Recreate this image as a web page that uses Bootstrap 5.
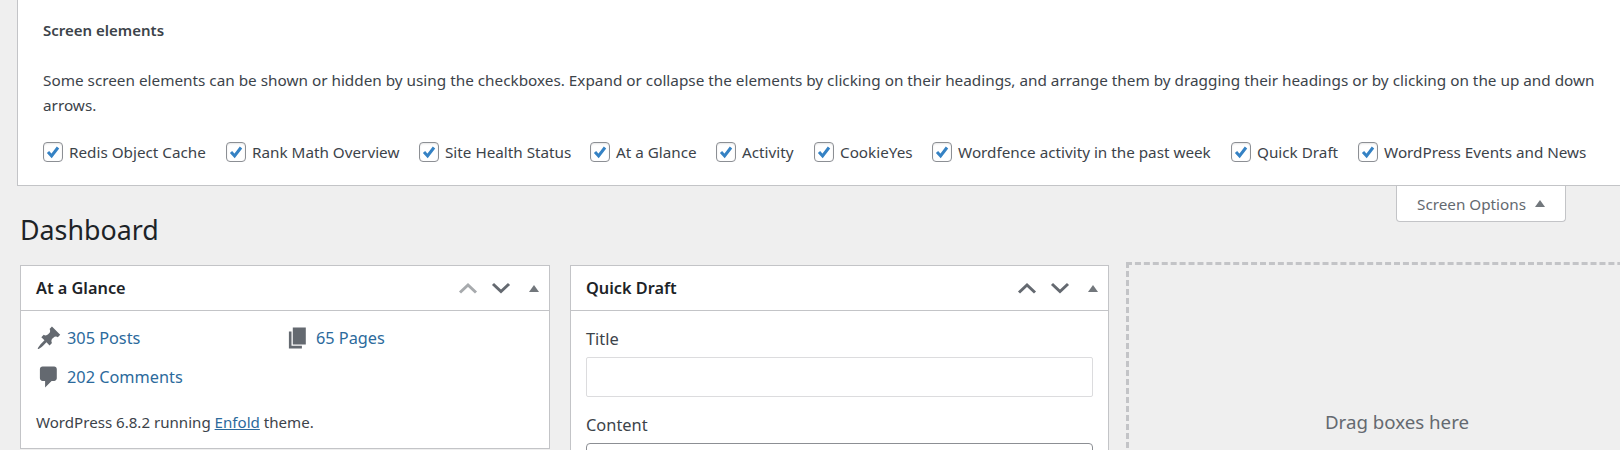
<!DOCTYPE html>
<html lang="en"><head><meta charset="utf-8"><title>Dashboard</title>
<link href="https://cdn.jsdelivr.net/npm/bootstrap@5.3.0/dist/css/bootstrap.min.css" rel="stylesheet">
<style>
html,body{height:450px;overflow:hidden}
body{background:#efefef;color:#3c434a;font-family:"Noto Sans","Open Sans",sans-serif;font-size:15.25px;line-height:24px}
a{color:#2c6a9c}
.opts-panel{margin-left:17px;height:186px;background:#fff;border-left:1px solid #c3c4c7;border-bottom:1px solid #c3c4c7;padding:18px 25px 0}
.opts-title{font-weight:600;font-size:15px;line-height:24px;margin:0 0 26px}
.opts-text{margin:0 0 23px;line-height:24.5px;font-size:15.3px}
.opts-check{display:flex;align-items:center;white-space:nowrap}
.opts-check .form-check-input{width:20px;height:20px;margin:0 6px 0 0;flex:none;border:1px solid #8c8f94;border-radius:4px;background-color:#fff;background-size:20px 20px;box-shadow:inset 0 1px 2px rgba(0,0,0,.1);
background-image:url("data:image/svg+xml,%3Csvg xmlns='http://www.w3.org/2000/svg' viewBox='0 0 20 20'%3E%3Cpath fill='none' stroke='%233582c4' stroke-width='3' d='M5 10l3.6 4L15 5.5'/%3E%3C/svg%3E")}
.opts-tab-row{height:36px;padding-right:54px}
.opts-tab{width:170px;height:36px;background:#fff;border:1px solid #c3c4c7;border-top:0;border-radius:0 0 4px 4px;color:#646970;gap:9px}
.tri{width:0;height:0;border-left:5px solid transparent;border-right:5px solid transparent;border-bottom:7px solid #72777c;display:block}
.tri-ctl{margin-left:5px}
.page-title{font-size:26.8px;font-weight:400;line-height:34px;color:#1d2327;margin:-9px 0 0 20px;height:49px}
.cols{padding-left:20px;align-items:flex-start;height:189px;overflow:hidden}
.box{background:#fff;border:1px solid #c3c4c7;flex:none}
.box-a{width:530px;height:184px;margin-top:3px}
.box-b{width:539px;height:200px;margin:3px 0 0 20px}
.box-h{height:45px;border-bottom:1px solid #c3c4c7;padding:2px 10px 0 15px}
.box-t{font-size:16.3px;font-weight:600;color:#1d2327;margin:0}
.box-ctl{gap:13px;margin-top:-2px}
.box-ctl svg{display:block}
.glance{padding:7px 15px 0 15px}
.glance-row{height:39px}
.glance-i{gap:5px;flex:none}
.glance-i.first{width:249px}
.glance-i svg{flex:none;fill:#646970}
.glance-i a{text-decoration:none;font-size:16.3px}
.glance-foot{margin:14px 0 0;line-height:24px;font-size:15.1px}
.draft{padding:16px 15px 0}
.draft label{display:block;font-size:16.4px;line-height:24px;margin:0}
.draft .form-control{border:1px solid #dcdcde;border-radius:2px;height:40px;margin:6px 0 16px;padding:0 9px;box-shadow:none}
.draft textarea.form-control{border-color:#8c8f94;border-radius:4px;height:100px;margin:6px 0 0;resize:none}
.drop{flex:none;width:542px;height:240px;margin-left:17px;border:3px dashed #c3c4c7;color:#646970;font-size:18.7px;text-align:center;padding-top:145px}
</style></head>
<body>
<div class="opts-panel">
  <p class="opts-title">Screen elements</p>
  <p class="opts-text">Some screen elements can be shown or hidden by using the checkboxes. Expand or collapse the elements by clicking on their headings, and arrange them by dragging their headings or by clicking on the up and down arrows.</p>
  <div class="d-flex">
    <label class="opts-check" style="width:183px"><input class="form-check-input" type="checkbox" checked>Redis Object Cache</label>
    <label class="opts-check" style="width:193px"><input class="form-check-input" type="checkbox" checked>Rank Math Overview</label>
    <label class="opts-check" style="width:171px"><input class="form-check-input" type="checkbox" checked>Site Health Status</label>
    <label class="opts-check" style="width:126px"><input class="form-check-input" type="checkbox" checked>At a Glance</label>
    <label class="opts-check" style="width:98px"><input class="form-check-input" type="checkbox" checked>Activity</label>
    <label class="opts-check" style="width:118px"><input class="form-check-input" type="checkbox" checked>CookieYes</label>
    <label class="opts-check" style="width:299px"><input class="form-check-input" type="checkbox" checked>Wordfence activity in the past week</label>
    <label class="opts-check" style="width:127px"><input class="form-check-input" type="checkbox" checked>Quick Draft</label>
    <label class="opts-check"><input class="form-check-input" type="checkbox" checked>WordPress Events and News</label>
  </div>
</div>
<div class="d-flex justify-content-end opts-tab-row">
  <div class="opts-tab d-flex align-items-center justify-content-center">Screen Options <span class="tri"></span></div>
</div>
<h1 class="page-title">Dashboard</h1>
<div class="d-flex cols">
  <section class="box box-a">
    <div class="box-h d-flex align-items-center justify-content-between">
      <h2 class="box-t">At a Glance</h2>
      <div class="box-ctl d-flex align-items-center">
        <svg width="20" height="12" viewBox="0 0 20 12"><path d="M2 10.500 10 3l8 7.500" fill="none" stroke="#a7aaad" stroke-width="3"/></svg>
        <svg width="20" height="12" viewBox="0 0 20 12"><path d="M2 2l8 7.500L18 2" fill="none" stroke="#646970" stroke-width="3"/></svg>
        <span class="tri tri-ctl"></span>
      </div>
    </div>
    <div class="glance">
      <div class="d-flex glance-row">
        <div class="glance-i first d-flex align-items-center"><svg width="26" height="26" viewBox="0 0 20 20"><path d="M10.44 3.02l1.82-1.82 6.36 6.35-1.83 1.82c-1.05-.68-2.48-.57-3.41.36l-.75.75c-.92.93-1.04 2.35-.35 3.41l-1.83 1.82-2.41-2.41-2.8 2.79c-.42.42-3.38 2.71-3.8 2.29s1.86-3.39 2.28-3.81l2.79-2.79L4.1 9.36l1.83-1.82c1.05.69 2.48.57 3.41-.36l.75-.75c.93-.92 1.04-2.35.35-3.41z"/></svg><a href="#">305 Posts</a></div>
        <div class="glance-i d-flex align-items-center"><svg width="26" height="26" viewBox="0 0 20 20"><path d="M6 15V2h10v13H6zm-1 1h8v2H3V5h2v11z"/></svg><a href="#">65 Pages</a></div>
      </div>
      <div class="d-flex glance-row">
        <div class="glance-i first d-flex align-items-center"><svg width="26" height="26" viewBox="0 0 20 20"><path d="M5 2h9c1.100 0 2 .9 2 2v7c0 1.100-.9 2-2 2h-2l-5 5v-5H5c-1.100 0-2-.9-2-2V4c0-1.100.9-2 2-2z"/></svg><a href="#">202 Comments</a></div>
      </div>
      <p class="glance-foot">WordPress 6.8.2 running <a href="#">Enfold</a> theme.</p>
    </div>
  </section>
  <section class="box box-b">
    <div class="box-h d-flex align-items-center justify-content-between">
      <h2 class="box-t">Quick Draft</h2>
      <div class="box-ctl d-flex align-items-center">
        <svg width="20" height="12" viewBox="0 0 20 12"><path d="M2 10.500 10 3l8 7.500" fill="none" stroke="#646970" stroke-width="3"/></svg>
        <svg width="20" height="12" viewBox="0 0 20 12"><path d="M2 2l8 7.500L18 2" fill="none" stroke="#646970" stroke-width="3"/></svg>
        <span class="tri tri-ctl"></span>
      </div>
    </div>
    <div class="draft">
      <label for="t">Title</label><input id="t" class="form-control" type="text">
      <label for="c">Content</label><textarea id="c" class="form-control"></textarea>
    </div>
  </section>
  <div class="drop">Drag boxes here</div>
</div>
</body></html>
